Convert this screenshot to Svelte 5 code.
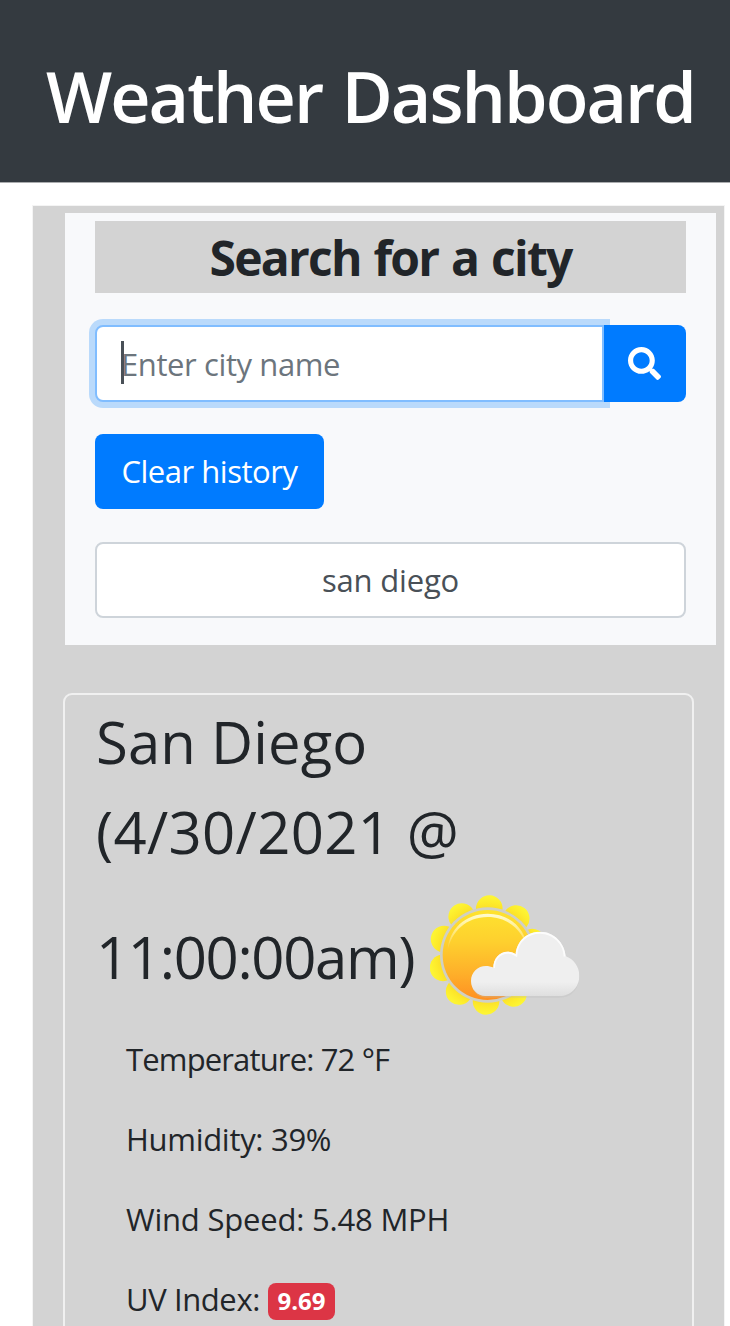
<script>
  const readings = [
    { text: 'Temperature: 72 °F', spacing: '-0.85px' },
    { text: 'Humidity: 39%', spacing: '-0.3px' },
    { text: 'Wind Speed: 5.48 MPH', spacing: '-0.2px' }
  ];
  const petals = [2, 38, 74, 110, 146, 182, 218, 254, 290, 326];
</script>

<header><h1><span>Weather Dashboard</span></h1></header>

<main>
  <section class="search">
    <h3><span>Search for a city</span></h3>
    <form class="group" onsubmit={(e) => e.preventDefault()}>
      <div class="field"><i class="caret"></i><span>Enter city name</span></div>
      <button class="go" aria-label="Search">
        <svg viewBox="0 0 512 512" width="33" height="33"><path fill="#fff" d="M505 442.7L405.3 343c-4.5-4.500-10.600-7-17-7H372c27.600-35.300 44-79.700 44-128C416 93.100 322.900 0 208 0S0 93.100 0 208s93.100 208 208 208c48.300 0 92.700-16.400 128-44v16.300c0 6.400 2.500 12.500 7 17l99.700 99.700c9.400 9.400 24.600 9.400 33.900 0l28.300-28.300c9.400-9.400 9.400-24.600.1-34zM208 336c-70.700 0-128-57.200-128-128 0-70.700 57.200-128 128-128 70.700 0 128 57.200 128 128 0 70.700-57.200 128-128 128z"/></svg>
      </button>
    </form>
    <button class="clear"><span>Clear history</span></button>
    <div class="past"><span>san diego</span></div>
  </section>

  <section class="card">
    <h2>
      <div class="line"><span class="l1">San Diego</span></div>
      <div class="line"><span class="l2">(4/30/2021 @</span></div>
      <div class="line last">
        <span class="l3">11:00:00am)</span>
        <svg class="icon" viewBox="90 45 450 360" width="150" height="120">
          <defs>
            <linearGradient id="sun" x1="0" y1="0" x2="0" y2="1">
              <stop offset="0" stop-color="#fee32f" /><stop offset=".35" stop-color="#fed02e" />
              <stop offset=".7" stop-color="#feb02a" /><stop offset="1" stop-color="#ff9022" />
            </linearGradient>
            <linearGradient id="shine" x1="0" y1="0" x2="0" y2="1">
              <stop offset="0" stop-color="#fffbd0" /><stop offset="1" stop-color="#fffbd0" stop-opacity="0" />
            </linearGradient>
            <linearGradient id="cloud" x1="0" y1="0" x2="0" y2="1">
              <stop offset="0" stop-color="#efefef" /><stop offset=".78" stop-color="#efefef" /><stop offset="1" stop-color="#dedede" />
            </linearGradient>
            <radialGradient id="petal" gradientUnits="userSpaceOnUse" cx="263" cy="225" r="180">
              <stop offset=".78" stop-color="#fbe029" /><stop offset=".88" stop-color="#fdec2c" /><stop offset="1" stop-color="#fdf736" />
            </radialGradient>
            <clipPath id="cloudClip"><path d="M256 348C232 348 213 328 213 303C213 277 233 258 258 258C266 258 273 260 280 264C280 236 298 215 323 215C333 215 341 218 347 223C350 184 380 155 420 155C461 155 494 188 497 229C520 236 538 260 538 287C538 322 512 348 478 348Z" /></clipPath>
          </defs>
          {#each petals as a}
            <circle cx="263" cy="86" r="40" fill="url(#petal)" transform="rotate({a} 263 225)" />
          {/each}
          <circle cx="263" cy="225" r="143" fill="#d0d0c4" />
          <circle cx="263" cy="225" r="135" fill="url(#sun)" />
          <path d="M143 214C145 146 198 101 263 101S381 146 383 214C373 154 326 111 263 111S153 154 143 214Z" fill="url(#shine)" />
          <path d="M256 353H478C512 353 532 332 537 300L213 306C215 334 234 353 256 353Z" fill="#bdbdbd" opacity=".3" />
          <g clip-path="url(#cloudClip)">
            <rect x="210" y="150" width="330" height="200" fill="url(#cloud)" />
            <path d="M280 264C280 236 298 216 323 216C333 216 341 219 347 223C350 184 380 156 420 156C461 156 494 188 496 229" fill="none" stroke="#fcfcfc" stroke-width="10" />
          </g>
        </svg>
      </div>
    </h2>
    {#each readings as r}
      <p><span style="letter-spacing:{r.spacing}">{r.text}</span></p>
    {/each}
    <p><span class="uv">UV Index:</span><b class="badge">9.69</b></p>
  </section>
</main>

<style>
  :global(body) { margin: 0; background: #fff; color: #212529; overflow: hidden; }
  :global(#app) { font: 31px/48px 'Open Sans', 'Noto Sans', sans-serif; height: 1326px; overflow: hidden; }
  h1, h2, h3, p { margin: 0; font-weight: 400; }
  span { white-space: pre; }
  button { border: 0; font: inherit; padding: 0; color: #fff; background: #007bff; }
  header { height: 128px; padding-top: 54px; background: #343a40; box-shadow: 0 1px #aaacae; }
  h1 { font-size: 70px; line-height: 84px; font-weight: 600; color: #fff; padding-left: 46px; letter-spacing: -1.95px; word-spacing: 3px; }
  main { margin: 24px 6px 0 33px; padding: 7px 8px 0 32px; background: #d3d3d3; height: 1200px; box-shadow: 0 0 0 1px #f4f4f4; }
  .search { height: 424px; padding: 8px 30px 0; background: #f8f9fb; }
  h3 { height: 72px; line-height: 73px; background: #d3d3d3; text-align: center; font-size: 48px; font-weight: 700; letter-spacing: -1.75px; word-spacing: 2px; }
  .group { display: flex; height: 77px; margin-top: 32px; }
  .field { flex: 1; box-sizing: border-box; display: flex; align-items: center; position: relative; border: 2px solid #80bdff; border-radius: 8px 0 0 8px; background: #fff; box-shadow: 0 0 0 6px #badafb; color: #6c757d; padding-left: 24px; letter-spacing: -0.4px; }
  .caret { position: absolute; left: 24px; top: 14px; width: 3px; height: 43px; background: #495057; }
  .go { width: 82px; border-radius: 0 8px 8px 0; display: grid; place-items: center; position: relative; }
  .go svg { margin: 0 2px 0 0; }
  .clear { display: block; width: 229px; height: 75px; margin-top: 32px; padding-bottom: 2px; border-radius: 8px; letter-spacing: -0.47px; }
  .past { height: 76px; box-sizing: border-box; margin-top: 33px; border: 2px solid #ced4da; border-radius: 8px; background: #fff; color: #495057; text-align: center; line-height: 73px; letter-spacing: -0.2px; }
  .card { box-sizing: border-box; width: 631px; height: 700px; margin: 48px 0 0 -2px; border: 2px solid #f0f0f0; border-radius: 9px; padding: 1px 0 0 31px; }
  h2 { font-size: 58px; }
  .line { height: 90px; line-height: 91px; display: flex; align-items: center; }
  .last { height: 160px; }
  .l1 { letter-spacing: 0.1px; }
  .l2 { letter-spacing: 0.35px; }
  .l3 { letter-spacing: -1.3px; }
  .icon { margin-left: 16px; margin-top: -3px; }
  p { height: 48px; margin: 0 0 32px 30px; display: flex; align-items: center; position: relative; top: -1px; }
  .uv { letter-spacing: -0.4px; }
  .badge { margin: 5px 0 0 8px; width: 67px; height: 37px; border-radius: 8px; background: #dc3545; color: #fff; font-size: 24px; line-height: 36px; text-align: center; }
</style>
